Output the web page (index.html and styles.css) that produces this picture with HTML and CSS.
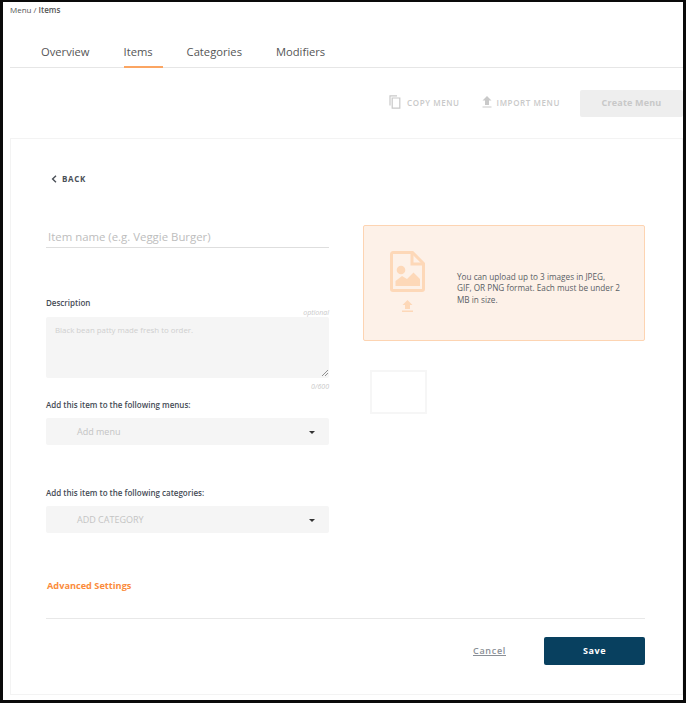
FILE: index.html
```html
<!DOCTYPE html>
<html lang="en">
<head>
    <meta charset="UTF-8">
    <meta name="viewport" content="width=device-width, initial-scale=1.0">
    <title>Menu Items</title>
    <link rel="stylesheet" href="styles.css">
</head>
<body>
    <div class="frame">
        <div class="breadcrumb">Menu / <strong>Items</strong></div>

        <!-- Tabs -->
        <div class="tabs">
            <a class="tab">Overview</a>
            <a class="tab active">Items</a>
            <a class="tab">Categories</a>
            <a class="tab">Modifiers</a>
        </div>

        <!-- Toolbar -->
        <div class="toolbar">
            <span class="tool tool-copy">
                <svg width="12" height="14" viewBox="0 0 12 14"><path d="M1 10.5V.8h7M3.2 3h7.6v10.2H3.2z" fill="none" stroke="#c9c9c9" stroke-width="1.2"/></svg>
                COPY MENU
            </span>
            <span class="tool tool-import">
                <svg width="10" height="12" viewBox="0 0 10 12"><path d="M5 0l4.500 4.600H7V9H3V4.600H.5zM.5 10.400h9v1.200h-9z" fill="#c9c9c9"/></svg>
                IMPORT MENU
            </span>
            <button class="create-button">Create Menu</button>
        </div>

        <div class="content">
            <a class="back">
                <svg width="6" height="8" viewBox="0 0 6 8"><path d="M5 .8L1.600 4 5 7.200" fill="none" stroke="#4a4f57" stroke-width="1.4"/></svg>
                BACK
            </a>

            <div class="form-columns">
                <div class="form-left">
                    <div class="name-field">Item name (e.g. Veggie Burger)</div>

                    <div class="field-label description-label">Description</div>
                    <div class="hint">optional</div>
                    <div class="textarea">
                        Black bean patty made fresh to order.
                        <svg class="resize-grip" width="6" height="6" viewBox="0 0 6 6"><path d="M0 6l6-6M3 6l3-3" stroke="#777" stroke-width=".8"/></svg>
                    </div>
                    <div class="hint counter">0/600</div>

                    <div class="field-label">Add this item to the following menus:</div>
                    <div class="select">
                        <span>Add menu</span>
                        <span class="caret"></span>
                    </div>

                    <div class="field-label categories-label">Add this item to the following categories:</div>
                    <div class="select">
                        <span>ADD CATEGORY</span>
                        <span class="caret"></span>
                    </div>
                </div>

                <div class="form-right">
                    <div class="upload-box">
                        <div class="upload-icons">
                            <svg width="35" height="41" viewBox="0 0 35 41">
                                <path d="M1.500 3a1.500 1.500 0 0 1 1.500-1.500h19.500l11 11V38a1.500 1.500 0 0 1-1.500 1.500H3A1.500 1.500 0 0 1 1.500 38z" fill="none" stroke="#fdd8b8" stroke-width="3"/>
                                <path d="M22 2v11h11" fill="none" stroke="#fdd8b8" stroke-width="3"/>
                                <circle cx="11" cy="19" r="4.300" fill="#fdd8b8"/>
                                <path d="M5.500 35v-5l6.500-5 5 3 6.500-6.500 6.500 6.500v7z" fill="#fdd8b8"/>
                            </svg>
                            <svg width="11" height="12" viewBox="0 0 11 12"><path d="M5.500 0l5 5H8v4H3V5H.5zM0 10.500h11V12H0z" fill="#fdd8b8"/></svg>
                        </div>
                        <p class="upload-text">You can upload up to 3 images in JPEG, GIF, OR PNG format. Each must be under 2 MB in size.</p>
                    </div>
                    <div class="thumb"></div>
                </div>
            </div>

            <a class="advanced">Advanced Settings</a>

            <div class="actions">
                <a class="cancel">Cancel</a>
                <button class="save-button">Save</button>
            </div>
        </div>
    </div>
</body>
</html>
```

FILE: styles.css
```css
* {
    margin: 0;
    padding: 0;
    box-sizing: border-box;
}

body {
    font-family: "Open Sans", sans-serif;
    background-color: white;
    color: #4a4f57;
}

.frame {
    width: 686px;
    height: 703px;
    border: 3px solid #0a0a0a;
    border-top-width: 2px;
    background-color: white;
    overflow: hidden;
}

.breadcrumb {
    font-size: 8px;
    line-height: 11px;
    padding: 2px 0 0 7px;
    color: #555;
}

.breadcrumb strong {
    font-weight: 600;
}

/* Tabs */
.tabs {
    display: flex;
    gap: 34px;
    margin: 23px 0 0 7px;
    padding-left: 31px;
    height: 30px;
    border-bottom: 1px solid #e6e6e6;
}

.tab {
    font-size: 11.2px;
    line-height: 16px;
    padding-top: 6px;
    color: #555;
}

.tab.active {
    height: 30px;
    padding-right: 10px;
    margin-right: -10px;
    border-bottom: 2px solid #fba562;
}

/* Toolbar */
.toolbar {
    display: flex;
    justify-content: flex-end;
    align-items: center;
    height: 70px;
    font-size: 8px;
    letter-spacing: .6px;
    color: #c9c9c9;
    font-weight: 600;
}

.tool {
    display: flex;
    align-items: center;
    gap: 6px;
    padding-bottom: 2px;
}

.tool-copy {
    margin-right: 22px;
}

.tool-import {
    gap: 5px;
    margin-right: 20px;
}

.create-button {
    width: 103px;
    height: 27px;
    padding-bottom: 1px;
    border: none;
    border-radius: 2px;
    background-color: #eeeeee;
    color: #c8c8c8;
    font-family: inherit;
    font-size: 9px;
    font-weight: 700;
    letter-spacing: .2px;
}

/* Main form */
.content {
    height: 557px;
    margin: 0 0 0 7px;
    padding: 34px 37px 0 35px;
    border: 1px solid #f3f3f3;
}

.back {
    display: flex;
    align-items: center;
    gap: 5px;
    padding-left: 5px;
    font-size: 8px;
    line-height: 11px;
    font-weight: 700;
    letter-spacing: .7px;
}

.form-columns {
    display: flex;
    gap: 34px;
    margin-top: 41px;
}

.form-left {
    width: 283px;
}

.form-right {
    width: 282px;
}

.name-field {
    height: 23px;
    padding: 3px 0 0 2px;
    border-bottom: 1px solid #dedede;
    font-size: 11.4px;
    line-height: 18px;
    color: #bdbdbd;
}

.field-label {
    font-size: 8px;
    line-height: 11px;
    font-weight: 600;
    color: #454b55;
}

.description-label {
    margin-top: 49px;
}

.hint {
    font-size: 7px;
    line-height: 9px;
    font-style: italic;
    text-align: right;
    color: #c9c9c9;
}

.textarea {
    position: relative;
    height: 61px;
    padding: 8px 9px;
    background-color: #f5f5f5;
    border-radius: 2px;
    font-size: 7.85px;
    line-height: 11px;
    color: #cfcfcf;
}

.resize-grip {
    position: absolute;
    right: 1px;
    bottom: 2px;
}

.counter {
    margin: 4px 0 8px;
}

.select {
    display: flex;
    justify-content: space-between;
    align-items: center;
    height: 27px;
    margin-top: 8px;
    padding: 0 14px 0 31px;
    background-color: #f5f5f5;
    border-radius: 2px;
    font-size: 9px;
    color: #c4c4c4;
}

.caret {
    width: 0;
    height: 0;
    margin-top: 2px;
    border-left: 3px solid transparent;
    border-right: 3px solid transparent;
    border-top: 3px solid #333;
}

.categories-label {
    margin-top: 42px;
}

/* Upload panel */
.upload-box {
    display: flex;
    align-items: center;
    height: 116px;
    padding: 0 15px 0 25px;
    border: 1px solid #fdd4b2;
    border-radius: 2px;
    background-color: #fdf1e8;
}

.upload-icons {
    display: flex;
    flex-direction: column;
    align-items: center;
    gap: 8px;
    width: 36px;
    margin-right: 32px;
    padding-bottom: 4px;
}

.upload-text {
    max-width: 164px;
    margin-top: 10px;
    font-size: 8.2px;
    line-height: 11.4px;
    color: #5a5f66;
}

.thumb {
    width: 57px;
    height: 44px;
    margin: 29px 0 0 7px;
    border: 2px solid #f6f6f6;
}

/* Footer */
.advanced {
    display: block;
    margin-top: 47px;
    padding-left: 1px;
    font-size: 9.2px;
    line-height: 12px;
    font-weight: 700;
    color: #fb8c3c;
}

.actions {
    display: flex;
    justify-content: flex-end;
    align-items: center;
    gap: 38px;
    height: 64px;
    margin-top: 26px;
    border-top: 1px solid #e8e8e8;
}

.cancel {
    font-size: 9px;
    font-weight: 600;
    letter-spacing: .7px;
    color: #8a8f96;
    text-decoration: underline;
}

.save-button {
    width: 101px;
    height: 28px;
    border: none;
    border-radius: 2px;
    background-color: #08405f;
    color: white;
    font-family: inherit;
    font-size: 9px;
    font-weight: 700;
    letter-spacing: .6px;
}
```
